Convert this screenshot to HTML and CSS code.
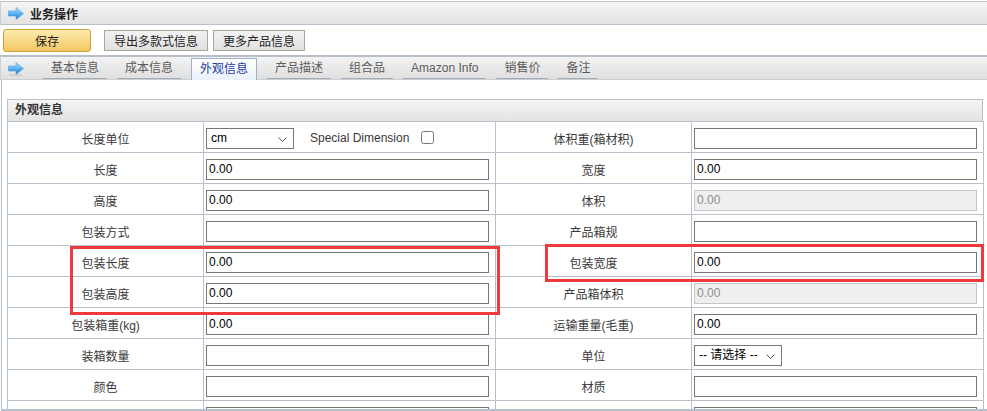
FILE: index.html
```html
<!DOCTYPE html>
<html lang="zh-CN">
<head>
<meta charset="utf-8">
<title>业务操作</title>
<link rel="stylesheet" href="styles.css">
</head>
<body>
<div class="topbar">
  <svg class="arrow" viewBox="0 0 16 13" width="16" height="13">
    <defs>
      <linearGradient id="ag1" x1="0" y1="0" x2="0" y2="1">
        <stop offset="0" stop-color="#b6e2fb"/>
        <stop offset="0.5" stop-color="#5fb3f0"/>
        <stop offset="1" stop-color="#1e78cf"/>
      </linearGradient>
    </defs>
    <polygon points="0.5,4 8,4 8,0.5 15.5,6.5 8,12.5 8,9 0.5,9" fill="url(#ag1)" stroke="#4f9fe0" stroke-width="0.6"/>
  </svg>
  <span class="title">业务操作</span>
</div>

<div class="toolbar">
  <button class="btn btn-save">保存</button>
  <button class="btn btn-gray btn-export">导出多款式信息</button>
  <button class="btn btn-gray">更多产品信息</button>
</div>

<div class="tabbar">
  <span class="tab-icon">
    <svg class="arrow" viewBox="0 0 16 14" width="16" height="14">
      <defs>
        <linearGradient id="ag2" x1="0" y1="0" x2="0" y2="1">
          <stop offset="0" stop-color="#b6e2fb"/>
          <stop offset="0.5" stop-color="#5fb3f0"/>
          <stop offset="1" stop-color="#1e78cf"/>
        </linearGradient>
      </defs>
      <rect x="1" y="12.5" width="13" height="1.2" fill="#c4c4c4"/>
      <polygon points="0.5,4 8,4 8,0.5 15.5,6.5 8,12.5 8,9 0.5,9" fill="url(#ag2)" stroke="#4f9fe0" stroke-width="0.6"/>
    </svg>
  </span>
  <ul class="tabs">
    <li class="tab">基本信息</li>
    <li class="tab">成本信息</li>
    <li class="tab active">外观信息</li>
    <li class="tab">产品描述</li>
    <li class="tab">组合品</li>
    <li class="tab">Amazon Info</li>
    <li class="tab">销售价</li>
    <li class="tab">备注</li>
  </ul>
</div>

<div class="content">
  <div class="panel">
    <div class="panel-head">外观信息</div>
    <table class="form">
      <colgroup>
        <col class="c-label"><col class="c-field"><col class="c-label"><col class="c-field">
      </colgroup>
      <tr>
        <td class="lbl">长度单位</td>
        <td class="fld">
          <span class="unit-line">
            <span class="sel-wrap">
              <select class="sel"><option>cm</option></select>
              <svg class="chev" viewBox="0 0 9 5" width="9" height="5"><polyline points="0.5,0.5 4.5,4.5 8.5,0.5" fill="none" stroke="#555" stroke-width="1"/></svg>
            </span>
            <span class="special">Special Dimension</span>
            <input type="checkbox" class="chk">
          </span>
        </td>
        <td class="lbl">体积重(箱材积)</td>
        <td class="fld"><input class="txt" type="text" value=""></td>
      </tr>
      <tr>
        <td class="lbl">长度</td>
        <td class="fld"><input class="txt" type="text" value="0.00"></td>
        <td class="lbl">宽度</td>
        <td class="fld"><input class="txt" type="text" value="0.00"></td>
      </tr>
      <tr>
        <td class="lbl">高度</td>
        <td class="fld"><input class="txt" type="text" value="0.00"></td>
        <td class="lbl">体积</td>
        <td class="fld"><input class="txt" type="text" value="0.00" disabled></td>
      </tr>
      <tr>
        <td class="lbl">包装方式</td>
        <td class="fld"><input class="txt" type="text" value=""></td>
        <td class="lbl">产品箱规</td>
        <td class="fld"><input class="txt" type="text" value=""></td>
      </tr>
      <tr>
        <td class="lbl">包装长度</td>
        <td class="fld"><input class="txt" type="text" value="0.00"></td>
        <td class="lbl">包装宽度</td>
        <td class="fld"><input class="txt" type="text" value="0.00"></td>
      </tr>
      <tr>
        <td class="lbl">包装高度</td>
        <td class="fld"><input class="txt" type="text" value="0.00"></td>
        <td class="lbl">产品箱体积</td>
        <td class="fld"><input class="txt" type="text" value="0.00" disabled></td>
      </tr>
      <tr>
        <td class="lbl">包装箱重(kg)</td>
        <td class="fld"><input class="txt" type="text" value="0.00"></td>
        <td class="lbl">运输重量(毛重)</td>
        <td class="fld"><input class="txt" type="text" value="0.00"></td>
      </tr>
      <tr>
        <td class="lbl">装箱数量</td>
        <td class="fld"><input class="txt" type="text" value=""></td>
        <td class="lbl">单位</td>
        <td class="fld">
          <span class="sel-wrap sel-pick">
            <select class="sel"><option>-- 请选择 --</option></select>
            <svg class="chev" viewBox="0 0 9 5" width="9" height="5"><polyline points="0.5,0.5 4.5,4.5 8.5,0.5" fill="none" stroke="#555" stroke-width="1"/></svg>
          </span>
        </td>
      </tr>
      <tr>
        <td class="lbl">颜色</td>
        <td class="fld"><input class="txt" type="text" value=""></td>
        <td class="lbl">材质</td>
        <td class="fld"><input class="txt" type="text" value=""></td>
      </tr>
      <tr>
        <td class="lbl">&nbsp;</td>
        <td class="fld"><input class="txt" type="text" value=""></td>
        <td class="lbl">&nbsp;</td>
        <td class="fld"><input class="txt" type="text" value=""></td>
      </tr>
    </table>
  </div>
  <div class="mark mark-left"></div>
  <div class="mark mark-right"></div>
</div>
</body>
</html>
```

FILE: styles.css
```css
html, body {
  margin: 0;
  padding: 0;
  background: #ffffff;
}

body {
  font-family: "Liberation Sans", "Noto Sans CJK SC", sans-serif;
  font-size: 12px;
  color: #333333;
  padding-top: 1px;
  overflow: hidden;
}

/* top title bar */
.topbar {
  display: flex;
  align-items: center;
  height: 22px;
  border-top: 1px solid #b7c1cb;
  border-bottom: 1px solid #b7c1cb;
  border-left: 1px solid #c9d0d6;
  background: linear-gradient(#f5f5f5, #e2e2e2);
  padding-left: 7px;
}

.arrow {
  display: block;
}

.title {
  font-weight: bold;
  color: #222222;
  margin-left: 6px;
  font-size: 12px;
}

/* toolbar */
.toolbar {
  display: flex;
  align-items: center;
  height: 30px;
  padding-left: 3px;
}

.btn {
  font-family: "Liberation Sans", "Noto Sans CJK SC", sans-serif;
  font-size: 12px;
  color: #222222;
  margin: 0;
  box-sizing: border-box;
  cursor: pointer;
}

.btn-save {
  width: 88px;
  height: 23px;
  border: 1px solid #cfa238;
  border-radius: 3px;
  background: linear-gradient(#fcebb0, #f3c862);
  margin-right: 13px;
}

.btn-gray {
  height: 21px;
  padding: 0 9px;
  border: 1px solid #a6a6a6;
  border-radius: 0;
  background: linear-gradient(#f2f2f2, #e1e1e1);
}

.btn-export {
  margin-right: 5px;
}

/* tab bar */
.tabbar {
  display: flex;
  align-items: flex-end;
  height: 22px;
  border-top: 2px solid #b5c0ca;
  border-bottom: 1px solid #c8ced4;
  border-left: 1px solid #c9d0d6;
  background: linear-gradient(#f3f3f3, #dfdfdf);
}

.tab-icon {
  align-self: center;
  margin-left: 7px;
  margin-top: 2px;
  width: 35px;
}

.tabs {
  display: flex;
  gap: 10px;
  list-style: none;
  margin: 0 0 -1px 0;
  padding: 0;
}

.tab {
  height: 20px;
  line-height: 20px;
  padding: 0 8px;
  color: #5c5c5c;
  border-bottom: 1px solid #a3abb3;
  white-space: nowrap;
}

.tab.active {
  height: 21px;
  line-height: 21px;
  border: 1px solid #9db0c6;
  border-bottom: none;
  background: linear-gradient(#ffffff, #eaf1fb);
  color: #1d3d9c;
}

/* content */
.content {
  position: relative;
  margin-left: 1px;
  height: 310px;
  padding: 19px 0 0 5px;
  border-left: 1px solid #b7c1cb;
  border-bottom: 2px solid #b7c1cb;
  overflow: hidden;
}

.panel {
  width: 976px;
}

.panel-head {
  height: 21px;
  line-height: 21px;
  border: 1px solid #b7c1cb;
  border-bottom: none;
  background: linear-gradient(#f4f4f4, #e3e3e3);
  padding-left: 7px;
  font-weight: bold;
  color: #333333;
}

.form {
  width: 976px;
  table-layout: fixed;
  border-collapse: collapse;
}

.c-label { width: 196px; }
.c-field { width: 292px; }

.form td {
  border: 1px solid #b7c1cb;
  height: 28px;
  padding: 2px 0 0 1px;
  vertical-align: middle;
}

.form td.lbl {
  text-align: center;
  color: #3a3a3a;
  padding-left: 0;
}

.txt {
  display: block;
  box-sizing: border-box;
  width: calc(100% - 7px);
  height: 21px;
  margin: 0 0 0 1px;
  padding: 1px 2px;
  border: 1px solid #767676;
  border-radius: 0;
  font-family: "Liberation Sans", "Noto Sans CJK SC", sans-serif;
  font-size: 12px;
  color: #000000;
  background: #ffffff;
  outline: none;
}

.txt:disabled {
  background: #efefef;
  border-color: #c6c6c6;
  color: #8c8c8c;
}

.unit-line {
  display: flex;
  align-items: center;
  margin-left: 1px;
}

.sel-wrap {
  position: relative;
  display: inline-block;
  width: 88px;
  height: 21px;
}

.sel {
  -webkit-appearance: none;
  appearance: none;
  display: block;
  box-sizing: border-box;
  height: 21px;
  width: 88px;
  border: 1px solid #767676;
  border-radius: 0;
  background: #ffffff;
  font-family: "Liberation Sans", "Noto Sans CJK SC", sans-serif;
  font-size: 12px;
  color: #000000;
  padding: 0 16px 0 4px;
  margin: 0;
}

.chev {
  position: absolute;
  right: 7px;
  top: 9px;
  pointer-events: none;
}

.sel-pick {
  display: block;
  margin-left: 1px;
}

.special {
  margin-left: 16px;
  color: #3a3a3a;
  white-space: nowrap;
}

.chk {
  width: 13px;
  height: 13px;
  margin: 0 0 2px 12px;
}

/* annotation rectangles */
.mark {
  position: absolute;
  box-sizing: border-box;
  border: 3px solid #ee3a3c;
  pointer-events: none;
}

.mark-left {
  left: 68px;
  top: 166px;
  width: 430px;
  height: 69px;
}

.mark-right {
  left: 543px;
  top: 164px;
  width: 439px;
  height: 38px;
}
```
